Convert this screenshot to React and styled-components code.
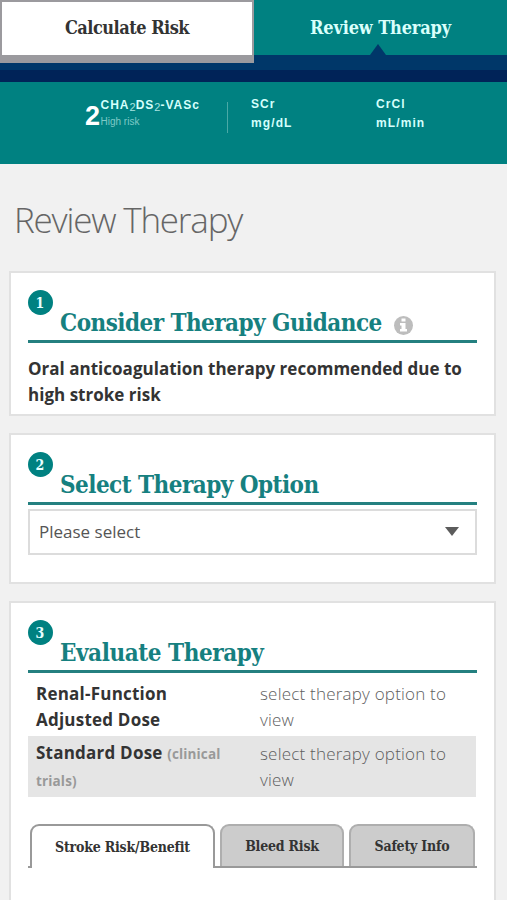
import React, { useState } from 'react';
import styled, { createGlobalStyle } from 'styled-components';

const slab = '"Roboto Slab", "DejaVu Serif Condensed", "DejaVu Serif", serif';
const teal = '#008181';

const GlobalStyle = createGlobalStyle`
  * {
    box-sizing: border-box;
  }
  body {
    margin: 0;
    background: #f1f1f1;
    color: #333;
    font-family: "Open Sans", sans-serif;
    overflow: hidden;
  }
`

const Page = styled.div`
  width: 507px;
  height: 900px;
  overflow: hidden;
`

const NavStrip = styled.nav`
  display: flex;
  align-items: flex-start;
  height: 82px;
  background: linear-gradient(${teal} 54.5px, #003769 54.5px, #003769 70px, #002358 70px);
`

const NavButton = styled.button`
  flex: 1;
  display: flex;
  flex-direction: column;
  align-items: center;
  padding: 15px 0 0;
  height: 55px;
  border: 0;
  background: none;
  color: #d9fffb;
  font: bold 18px/26px ${slab};
  font-stretch: condensed;
  letter-spacing: ${props => props.$spacing};
  white-space: nowrap;
`

const RaisedButton = styled(NavButton)`
  flex: 0 0 254px;
  height: 63px;
  padding-top: 13px;
  border: 2px solid #9b9a9e;
  border-bottom-width: 8px;
  background: #fff;
  color: #333;
`

const Pointer = styled.span`
  margin: 3px 5px 0 0;
  border: 8.5px solid transparent;
  border-top: 0;
  border-bottom: 11px solid #003769;
`

const ScoreBar = styled.header`
  display: flex;
  height: 82px;
  padding: 13px 0 0 85px;
  background: ${teal};
  color: #d5fffc;
  font-family: "Liberation Sans", sans-serif;
`

const Score = styled.div`
  display: flex;
  width: 142px;
`

const ScoreNumber = styled.strong`
  width: 15.5px;
  padding-top: 8px;
  color: #fff;
  font-size: 27px;
  line-height: 26px;
`

const ScoreName = styled.div`
  padding-top: 2px;
  font-size: 12px;
  font-weight: bold;
  line-height: 16px;
  letter-spacing: 1px;
  white-space: nowrap;
  sub {
    font-size: 11px;
    font-weight: normal;
    line-height: 0;
    vertical-align: -2px;
    letter-spacing: 0;
    color: #a8e3e0;
  }
`

const RiskLevel = styled.div`
  margin-top: 1px;
  color: #7fc9c6;
  font-size: 10px;
  font-weight: normal;
  letter-spacing: 0;
`

const Measure = styled.div`
  width: 125px;
  font-size: 12px;
  font-weight: bold;
  line-height: 18.5px;
  letter-spacing: 1.1px;
`

const Divider = styled.span`
  width: 1px;
  height: 31px;
  margin: 7px 23px 0 0;
  background: #4aa9a6;
`

const PageTitle = styled.h1`
  margin: 0;
  padding: 32px 14px 0;
  height: 107px;
  color: #666;
  font-size: 35px;
  font-weight: 300;
  line-height: 48px;
  letter-spacing: -1.2px;
`

const Card = styled.section`
  height: ${props => props.$height}px;
  margin: 0 11px 17px 9px;
  padding: 17px 17px 0;
  border: 2px solid #e1e1e1;
  background: #fff;
`

const CardHeader = styled.div`
  height: 53px;
  border-bottom: 3px solid #248080;
`

const Step = styled.div`
  width: 25px;
  height: 25px;
  margin-left: -.5px;
  border-radius: 50%;
  background: ${teal};
  color: #e8ffff;
  font: bold 14px/26px ${slab};
  font-stretch: condensed;
  text-align: center;
`

const CardTitle = styled.h2`
  display: flex;
  align-items: center;
  margin: -8px 0 0;
  padding-left: 32px;
  color: #168080;
  font: bold 24px/32px ${slab};
  font-stretch: condensed;
  letter-spacing: ${props => props.$spacing};
  white-space: nowrap;
`

const InfoIcon = styled.svg`
  width: 19px;
  height: 19px;
  margin: 4px 0 0 12px;
`

const Recommendation = styled.p`
  margin: 13px 0 0;
  font-size: 17px;
  font-weight: bold;
  line-height: 26px;
  letter-spacing: .02px;
`

const Select = styled.button`
  display: flex;
  align-items: center;
  justify-content: space-between;
  width: 100%;
  height: 46px;
  margin-top: 4px;
  padding: 0 16px 1px 9px;
  border: 2px solid #dcdcdc;
  background: #fff;
  color: #555;
  font: 17px "Open Sans", sans-serif;
`

const Arrow = styled.span`
  border: 7px solid transparent;
  border-top: 9px solid #5c5c5c;
  border-bottom: 0;
  margin-top: -1px;
`

const DoseRow = styled.div`
  display: grid;
  grid-template-columns: 224px 1fr;
  margin-right: 1px;
  padding: 0 0 0 8px;
  height: ${props => props.$height}px;
  padding-top: ${props => props.$top}px;
  background: ${props => props.$shaded ? '#e5e5e5' : '#fff'};
  font-size: 17px;
  line-height: 26px;
`

const DoseName = styled.div`
  margin-top: ${props => props.$raised ? -1 : 0}px;
  padding-right: 25px;
  font-weight: bold;
  letter-spacing: .22px;
  small {
    color: #999;
    font-size: 13.5px;
    letter-spacing: .15px;
  }
`

const DoseValue = styled.div`
  color: #5e5e5e;
  font-weight: 300;
  letter-spacing: .2px;
  padding-right: 10px;
`

const TabList = styled.div`
  display: flex;
  gap: 5px;
  height: 44px;
  margin-top: 27px;
  padding: 0 2px;
  border-bottom: 2px solid #999;
`

const Tab = styled.button`
  width: ${props => props.$width}px;
  height: ${props => props.$active ? 44 : 42}px;
  padding: 0 0 ${props => props.$active ? 1 : 0}px;
  border: 2px solid ${props => props.$active ? '#999' : '#aeaeae'};
  border-bottom: 0;
  border-radius: 9px 9px 0 0;
  background: ${props => props.$active ? '#fff' : '#ccc'};
  color: #333;
  font: bold 14px/20px ${slab};
  font-stretch: condensed;
  letter-spacing: -.2px;
  white-space: nowrap;
`

const tabs = [
  { name: 'Stroke Risk/Benefit', width: 185 },
  { name: 'Bleed Risk', width: 124 },
  { name: 'Safety Info', width: 126 },
]

const App = () => {
  const [active, setActive] = useState('Stroke Risk/Benefit')

  return (
    <Page>
      <GlobalStyle />
      <NavStrip>
        <RaisedButton $spacing="-.5px">Calculate Risk</RaisedButton>
        <NavButton $spacing="-.15px">
          Review Therapy
          <Pointer />
        </NavButton>
      </NavStrip>
      <ScoreBar>
        <Score>
          <ScoreNumber>2</ScoreNumber>
          <ScoreName>
            CHA<sub>2</sub>DS<sub>2</sub>-VASc
            <RiskLevel>High risk</RiskLevel>
          </ScoreName>
        </Score>
        <Divider />
        <Measure>SCr<br />mg/dL</Measure>
        <Measure>CrCl<br />mL/min</Measure>
      </ScoreBar>

      <PageTitle>Review Therapy</PageTitle>

      <Card $height={145}>
        <CardHeader>
          <Step>1</Step>
          <CardTitle $spacing="-.55px">
            Consider Therapy Guidance
            <InfoIcon viewBox="0 0 19 19">
              <circle cx="9.5" cy="9.5" r="9.5" fill="#bdbdbd" />
              <path d="M7.5 2.5h4v3h-4zM6 7h5.5v6H13v2.5H6V13h1.5V9.5H6z" fill="#fff" />
            </InfoIcon>
          </CardTitle>
        </CardHeader>
        <Recommendation>
          Oral anticoagulation therapy recommended due to high stroke risk
        </Recommendation>
      </Card>

      <Card $height={151}>
        <CardHeader>
          <Step>2</Step>
          <CardTitle $spacing="-.55px">Select Therapy Option</CardTitle>
        </CardHeader>
        <Select>
          Please select
          <Arrow />
        </Select>
      </Card>

      <Card $height={340}>
        <CardHeader>
          <Step>3</Step>
          <CardTitle $spacing="-.45px">Evaluate Therapy</CardTitle>
        </CardHeader>
        <DoseRow $height={63} $top={8}>
          <DoseName>Renal-Function Adjusted Dose</DoseName>
          <DoseValue>select therapy option to view</DoseValue>
        </DoseRow>
        <DoseRow $shaded $height={61} $top={5}>
          <DoseName $raised>Standard Dose <small>(clinical trials)</small></DoseName>
          <DoseValue>select therapy option to view</DoseValue>
        </DoseRow>
        <TabList>
          {tabs.map(tab => (
            <Tab
              key={tab.name}
              $width={tab.width}
              $active={tab.name === active}
              onClick={() => setActive(tab.name)}
            >
              {tab.name}
            </Tab>
          ))}
        </TabList>
      </Card>
    </Page>
  )
}

export default App
